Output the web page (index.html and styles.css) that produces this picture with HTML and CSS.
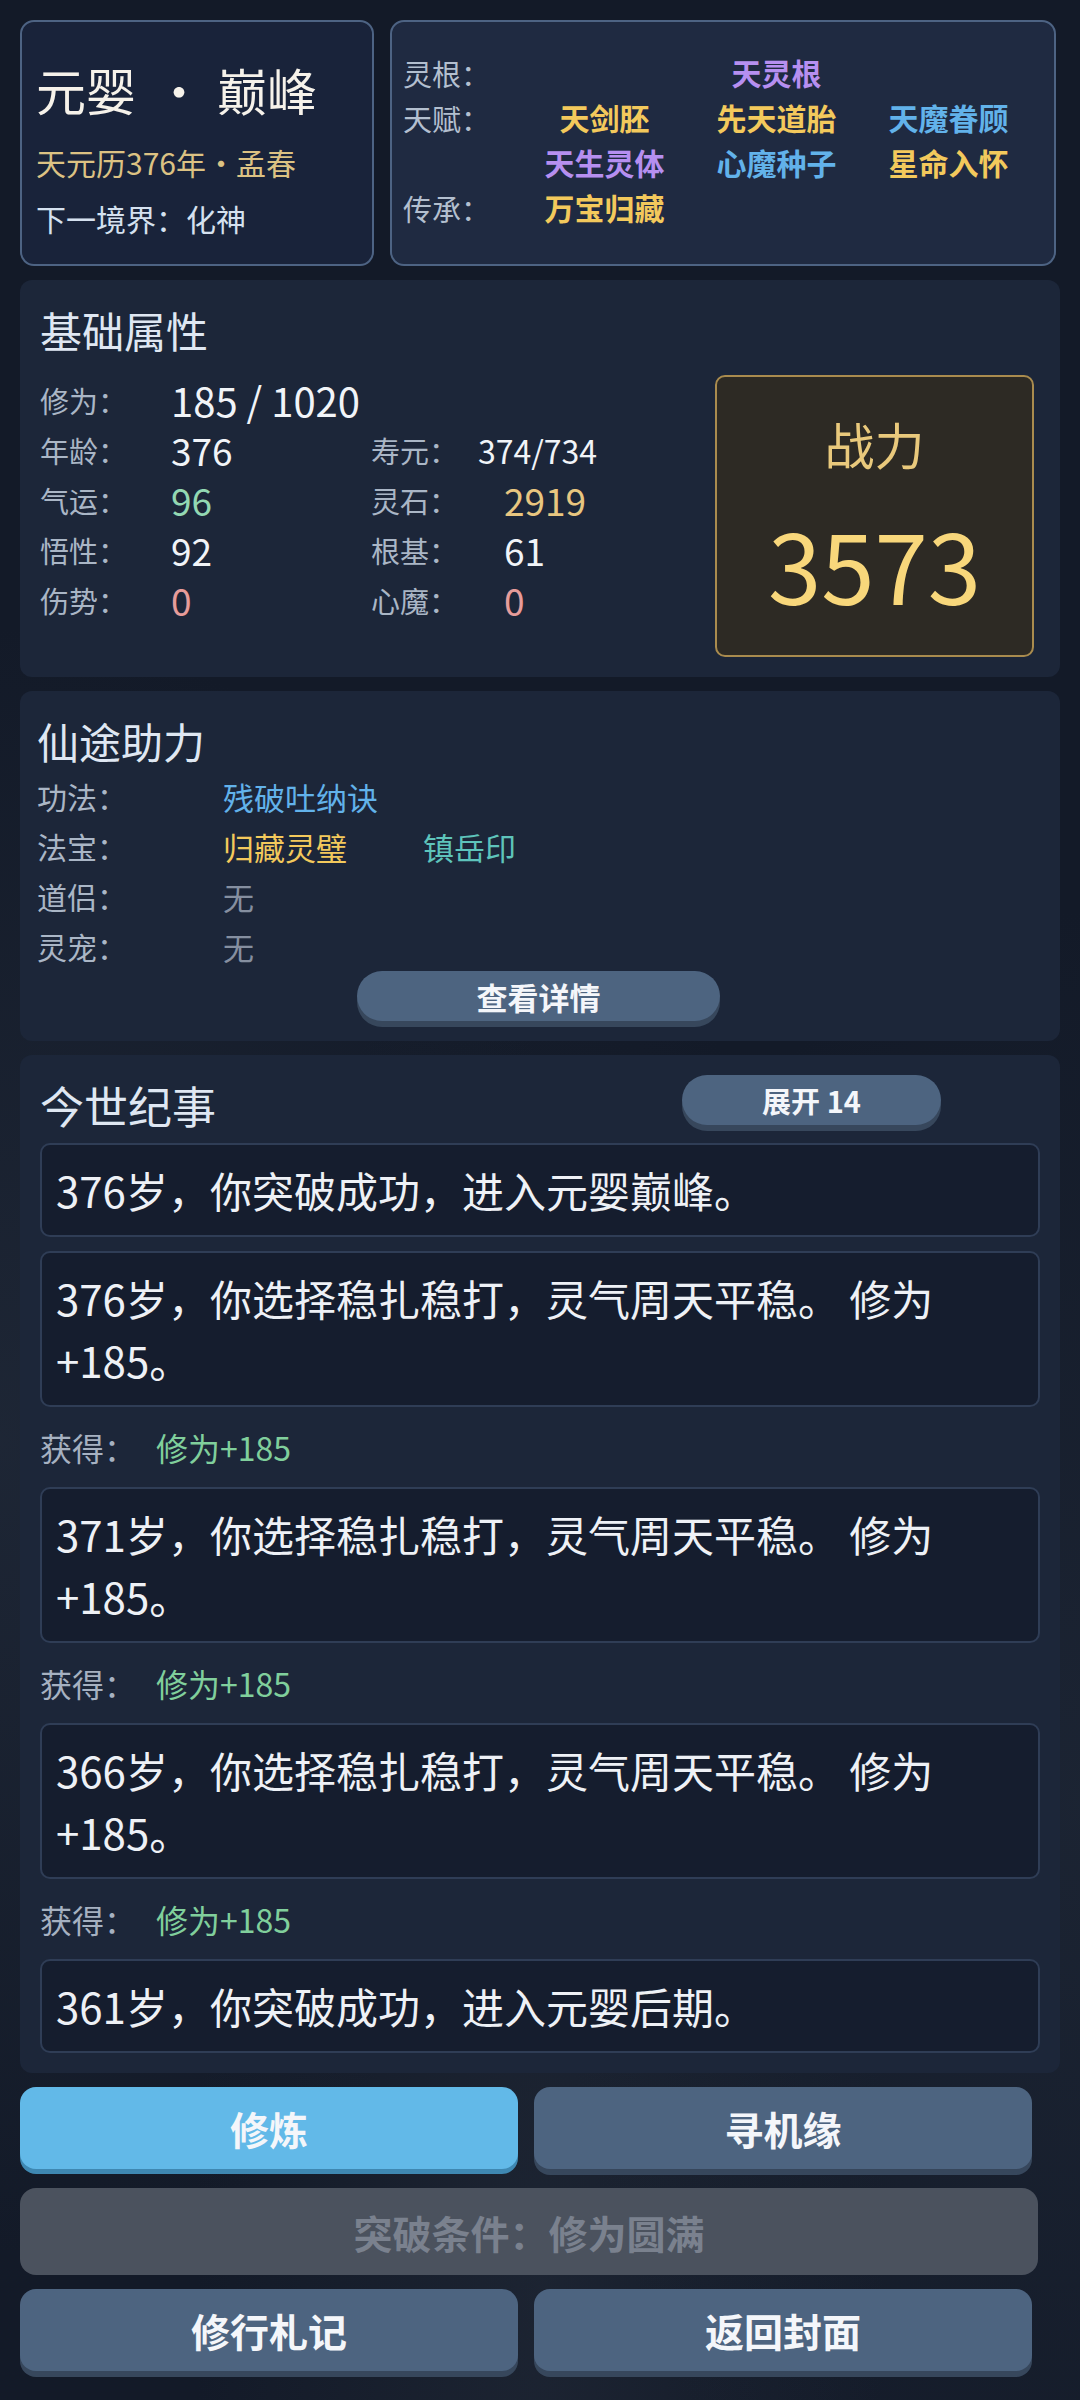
FILE: index.html
```html
<!DOCTYPE html>
<html lang="zh-CN">
<head>
    <meta charset="UTF-8">
    <meta name="viewport" content="width=device-width, initial-scale=1.0">
    <title>修仙人生</title>
    <link rel="stylesheet" href="styles.css">
</head>
<body>
    <div class="page">
        <!-- 顶部：境界 + 天赋 -->
        <div class="top-row">
            <div class="card realm-card">
                <div class="realm">元婴<span class="sep">·</span>巅峰</div>
                <div class="date">天元历376年<span class="dot">·</span>孟春</div>
                <div class="next">下一境界：化神</div>
            </div>
            <div class="card talent-card">
                <div class="t-label">灵根：</div>
                <div class="tag tag-wide purple">天灵根</div>

                <div class="t-label">天赋：</div>
                <div class="tag gold">天剑胚</div>
                <div class="tag gold">先天道胎</div>
                <div class="tag blue">天魔眷顾</div>

                <div class="t-label"></div>
                <div class="tag purple">天生灵体</div>
                <div class="tag blue">心魔种子</div>
                <div class="tag gold">星命入怀</div>

                <div class="t-label">传承：</div>
                <div class="tag gold">万宝归藏</div>
            </div>
        </div>

        <!-- 基础属性 -->
        <div class="panel">
            <h2>基础属性</h2>
            <div class="stats-wrap">
                <div class="stats">
                    <div class="s-label">修为：</div>
                    <div class="s-value big span3">185 / 1020</div>

                    <div class="s-label">年龄：</div>
                    <div class="s-value">376</div>
                    <div class="s-label">寿元：</div>
                    <div class="s-value small shift">374/734</div>

                    <div class="s-label">气运：</div>
                    <div class="s-value green">96</div>
                    <div class="s-label">灵石：</div>
                    <div class="s-value yellow">2919</div>

                    <div class="s-label">悟性：</div>
                    <div class="s-value">92</div>
                    <div class="s-label">根基：</div>
                    <div class="s-value">61</div>

                    <div class="s-label">伤势：</div>
                    <div class="s-value red">0</div>
                    <div class="s-label">心魔：</div>
                    <div class="s-value red">0</div>
                </div>
                <div class="power">
                    <div class="power-title">战力</div>
                    <div class="power-num">3573</div>
                </div>
            </div>
        </div>

        <!-- 仙途助力 -->
        <div class="panel panel-aid">
            <h2>仙途助力</h2>
            <div class="aid-row">
                <span class="a-label">功法：</span>
                <span class="a-val blue">残破吐纳诀</span>
            </div>
            <div class="aid-row">
                <span class="a-label">法宝：</span>
                <span class="a-val gold">归藏灵璧</span>
                <span class="a-val teal">镇岳印</span>
            </div>
            <div class="aid-row">
                <span class="a-label">道侣：</span>
                <span class="a-val none">无</span>
            </div>
            <div class="aid-row">
                <span class="a-label">灵宠：</span>
                <span class="a-val none">无</span>
            </div>
            <button class="btn btn-detail">查看详情</button>
        </div>

        <!-- 今世纪事 -->
        <div class="panel">
            <div class="log-head">
                <h2>今世纪事</h2>
                <button class="btn btn-expand">展开 14</button>
            </div>
            <div class="log">
                <div class="entry">376岁，你突破成功，进入元婴巅峰。</div>
                <div class="entry">376岁，你选择稳扎稳打，灵气周天平稳。 修为+185。</div>
                <div class="gain"><span class="g-label">获得：</span><span class="g-val">修为+185</span></div>
                <div class="entry">371岁，你选择稳扎稳打，灵气周天平稳。 修为+185。</div>
                <div class="gain"><span class="g-label">获得：</span><span class="g-val">修为+185</span></div>
                <div class="entry">366岁，你选择稳扎稳打，灵气周天平稳。 修为+185。</div>
                <div class="gain"><span class="g-label">获得：</span><span class="g-val">修为+185</span></div>
                <div class="entry">361岁，你突破成功，进入元婴后期。</div>
            </div>
        </div>

        <!-- 操作 -->
        <div class="actions">
            <button class="btn btn-action btn-primary">修炼</button>
            <button class="btn btn-action">寻机缘</button>
            <button class="btn btn-bar" disabled>突破条件：修为圆满</button>
            <button class="btn btn-action">修行札记</button>
            <button class="btn btn-action">返回封面</button>
        </div>
    </div>
</body>
</html>
```

FILE: styles.css
```css
* {
    box-sizing: border-box;
}
body {
    margin: 0;
    min-height: 100vh;
    font-family: "Noto Sans CJK SC", "Noto Sans", sans-serif;
    color: #eef2f7;
    background:
        radial-gradient(ellipse at 0% 60%, rgba(40, 50, 66, 0.5) 0%, rgba(18, 25, 39, 0) 40%),
        radial-gradient(ellipse at 100% 75%, rgba(38, 48, 64, 0.45) 0%, rgba(18, 25, 39, 0) 35%),
        radial-gradient(ellipse at 50% 95%, rgba(34, 42, 56, 0.6) 0%, rgba(18, 25, 39, 0) 45%),
        #131a28;
}
.page {
    padding: 20px 20px 0 20px;
    display: flex;
    flex-direction: column;
    gap: 14px;
}

/* 顶部两张卡片 */
.top-row {
    display: grid;
    grid-template-columns: 354px 666px;
    gap: 16px;
}
.card {
    border: 2px solid #4d6383;
    border-radius: 14px;
}
.realm-card {
    background: #19233a;
    padding: 32px 14px 0 14px;
}
.realm {
    font-size: 50px;
    line-height: 70px;
    color: #f6f2ea;
}
.sep {
    margin: 0 13px 0 18px;
}
.date {
    margin-top: 16px;
    font-size: 30px;
    line-height: 44px;
    color: #dcc283;
}
.next {
    margin-top: 12px;
    font-size: 30px;
    line-height: 44px;
    color: #d5e1ef;
}

.talent-card {
    background: #1f2a41;
    padding: 28px 18px 34px 11px;
    display: grid;
    grid-template-columns: 113px 167px 167px 167px;
    grid-auto-rows: 45px;
    column-gap: 5px;
    align-items: center;
}
.t-label {
    font-size: 29px;
    color: #b3bfcf;
}
.tag {
    font-size: 30px;
    font-weight: bold;
    text-align: center;
    line-height: 45px;
}
.tag-wide {
    grid-column: 2 / 5;
}
.purple { color: #b68ff0; }
.gold { color: #f3c95c; }
.blue { color: #62b2ea; }
.teal { color: #5ec4bb; }

/* 面板 */
.panel {
    background: #1c2639;
    border-radius: 12px;
    padding: 20px;
}
.panel-aid {
    padding-left: 17px;
}
h2 {
    margin: 0;
    font-size: 42px;
    line-height: 60px;
    font-weight: normal;
    color: #dfe7f2;
}

.stats-wrap {
    display: flex;
    margin-top: 15px;
}
.stats {
    flex: 1;
    display: grid;
    grid-template-columns: 131px 200px 133px 1fr;
    grid-auto-rows: 50px;
    align-items: center;
}
.s-label {
    font-size: 29px;
    color: #aab6c6;
}
.s-value {
    font-size: 37px;
    color: #f1f4f8;
}
.s-value.big {
    font-size: 40px;
}
.s-value.small {
    font-size: 32px;
}
.s-value.shift {
    margin-left: -26px;
}
.span3 {
    grid-column: 2 / 5;
}
.green { color: #93d8b3; }
.yellow { color: #e8c680; }
.red { color: #e79c9a; }

.power {
    width: 319px;
    height: 282px;
    margin-right: 6px;
    border: 2px solid #a98b4e;
    border-radius: 10px;
    background: #2d2a24;
    display: flex;
    flex-direction: column;
    align-items: center;
    justify-content: center;
    gap: 36px;
}
.power-title {
    font-size: 50px;
    line-height: 60px;
    color: #e9c97c;
}
.power-num {
    font-size: 96px;
    line-height: 110px;
    color: #f8d77b;
}

/* 仙途助力 */
.aid-row {
    display: flex;
    align-items: center;
    height: 50px;
    gap: 76px;
}
.a-label {
    width: 110px;
    font-size: 30px;
    color: #aab6c6;
}
.a-val {
    font-size: 31px;
}
.a-val.none {
    color: #858fa0;
}

.btn {
    font-family: "Noto Sans CJK SC", "Noto Sans", sans-serif;
    font-weight: bold;
    color: #f4f6fa;
    border: none;
    cursor: pointer;
    background: #4d6480;
    box-shadow: 0 6px 0 #37475c;
}
.btn-detail {
    display: block;
    margin: 0 auto;
    width: 363px;
    height: 50px;
    border-radius: 25px;
    font-size: 31px;
}

/* 今世纪事 */
.log-head {
    display: flex;
    align-items: flex-start;
    justify-content: space-between;
}
.log-head h2 {
    font-size: 44px;
}
.btn-expand {
    width: 259px;
    height: 50px;
    border-radius: 25px;
    font-size: 29px;
    margin-right: 99px;
}
.log {
    margin-top: 8px;
    display: flex;
    flex-direction: column;
    gap: 14px;
}
.entry {
    background: #151d2e;
    border: 2px solid #2f3d56;
    border-radius: 10px;
    padding: 14px;
    font-size: 42px;
    line-height: 62px;
    color: #eef1f6;
}
.gain {
    height: 52px;
    display: flex;
    align-items: center;
    font-size: 32px;
}
.g-label {
    width: 116px;
    color: #a6b1c1;
}
.g-val {
    color: #80cf9c;
}

/* 底部按钮 */
.actions {
    display: grid;
    grid-template-columns: 498px 498px;
    column-gap: 16px;
    row-gap: 14px;
}
.btn-action {
    height: 82px;
    margin-bottom: 5px;
    border-radius: 16px;
    font-size: 39px;
}
.btn-primary {
    background: #62b9e8;
    box-shadow: 0 5px 0 #3f88b2;
}
.btn-bar {
    grid-column: 1 / 3;
    width: 1018px;
    height: 87px;
    border-radius: 16px;
    font-size: 39px;
    background: #4b525e;
    color: #7a818e;
    box-shadow: none;
    cursor: default;
}
```
